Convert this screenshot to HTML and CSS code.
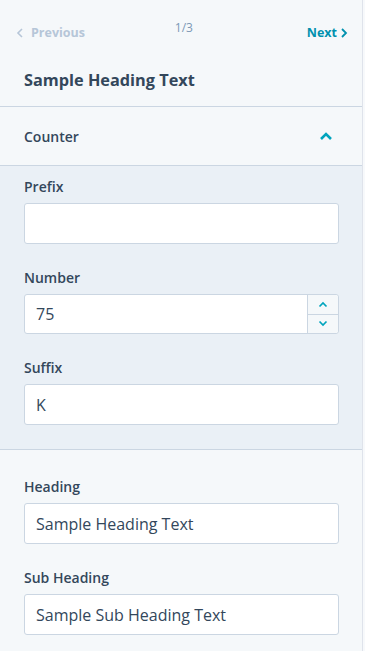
FILE: index.html
```html
<!DOCTYPE html>
<html>
<head>
<meta charset="utf-8">
<link rel="stylesheet" href="styles.css">
</head>
<body>
<div class="panel">
  <div class="nav">
    <span class="nav-prev"><svg class="chev" width="8" height="10" viewBox="0 0 8 10"><path d="M6 1 L2 5 L6 9" fill="none" stroke="currentColor" stroke-width="1.6"/></svg>Previous</span>
    <span class="nav-count">1/3</span>
    <span class="nav-next">Next<svg class="chev" width="8" height="10" viewBox="0 0 8 10"><path d="M2 1 L6 5 L2 9" fill="none" stroke="currentColor" stroke-width="1.8"/></svg></span>
  </div>
  <div class="title">Sample Heading Text</div>

  <div class="section-head">
    <span>Counter</span>
    <svg width="14" height="10" viewBox="0 0 14 10"><path d="M2 8 L7 3 L12 8" fill="none" stroke="#00a4bd" stroke-width="2.6"/></svg>
  </div>

  <div class="section-body">
    <div class="field">
      <div class="label">Prefix</div>
      <div class="input"></div>
    </div>
    <div class="field">
      <div class="label">Number</div>
      <div class="input number">
        <span class="value">75</span>
        <div class="stepper">
          <div class="step"><svg width="10" height="7" viewBox="0 0 10 7"><path d="M1.5 5.5 L5 2 L8.5 5.5" fill="none" stroke="#00a4bd" stroke-width="1.7"/></svg></div>
          <div class="step"><svg width="10" height="7" viewBox="0 0 10 7"><path d="M1.5 1.5 L5 5 L8.5 1.5" fill="none" stroke="#00a4bd" stroke-width="1.7"/></svg></div>
        </div>
      </div>
    </div>
    <div class="field">
      <div class="label">Suffix</div>
      <div class="input"><span class="value">K</span></div>
    </div>
  </div>

  <div class="section-plain">
    <div class="field">
      <div class="label">Heading</div>
      <div class="input"><span class="value">Sample Heading Text</span></div>
    </div>
    <div class="field">
      <div class="label">Sub Heading</div>
      <div class="input"><span class="value">Sample Sub Heading Text</span></div>
    </div>
  </div>
</div>
</body>
</html>
```

FILE: styles.css
```css
* { box-sizing: border-box; }
html, body { margin: 0; padding: 0; }
body {
  background: #f7f9fb;
  font-family: "Open Sans", "Liberation Sans", sans-serif;
  color: #33475b;
  height: 651px;
  overflow: hidden;
}
.panel {
  width: 363px;
  min-height: 651px;
  background: #f5f8fa;
  border-right: 1px solid #dfe3eb;
}
.nav {
  height: 46px;
  display: flex;
  justify-content: space-between;
  align-items: flex-start;
  padding: 0 14px 0 16px;
}
.nav-prev, .nav-next {
  margin-top: 24px;
  font-size: 12.5px;
  font-weight: 700;
  line-height: 18px;
  display: flex;
  align-items: center;
}
.nav-prev { color: #b6c6d8; }
.nav-prev .chev { margin-right: 7px; }
.nav-next { color: #0091ae; }
.nav-next .chev { margin-left: 3px; }
.nav-count {
  margin-top: 19px;
  margin-left: -24px;
  font-size: 12px;
  line-height: 18px;
  color: #7c98b6;
}
.title {
  padding: 22px 24px 14px;
  font-size: 16.3px;
  font-weight: 700;
  line-height: 24px;
  border-bottom: 1px solid #cbd6e2;
}
.section-head {
  height: 59px;
  display: flex;
  align-items: center;
  justify-content: space-between;
  padding: 0 29px 0 24px;
  font-size: 14px;
  font-weight: 600;
  border-bottom: 1px solid #cbd6e2;
}
.section-body {
  background: #eaf0f6;
  padding: 11px 24px 24px 24px;
  border-bottom: 1px solid #cbd6e2;
}
.section-plain {
  padding: 27px 24px 0 24px;
}
.field { margin-bottom: 24px; }
.field:last-child { margin-bottom: 0; }
.label {
  font-size: 14px;
  font-weight: 600;
  line-height: 20px;
  margin-bottom: 6px;
}
.input {
  height: 41px;
  width: 315px;
  background: #fff;
  border: 1px solid #cbd6e2;
  border-radius: 3px;
  display: flex;
  align-items: center;
  padding-left: 11px;
  font-size: 16px;
  color: #33475b;
}
.input.number {
  height: 40px;
  padding-right: 0;
}
.value { flex: 1; }
.stepper {
  width: 31px;
  height: 100%;
  border-left: 1px solid #cbd6e2;
  display: flex;
  flex-direction: column;
  background: #f5f8fa;
  border-radius: 0 3px 3px 0;
}
.step {
  flex: 1;
  display: flex;
  align-items: center;
  justify-content: center;
}
.step:first-child { border-bottom: 1px solid #cbd6e2; }
```
